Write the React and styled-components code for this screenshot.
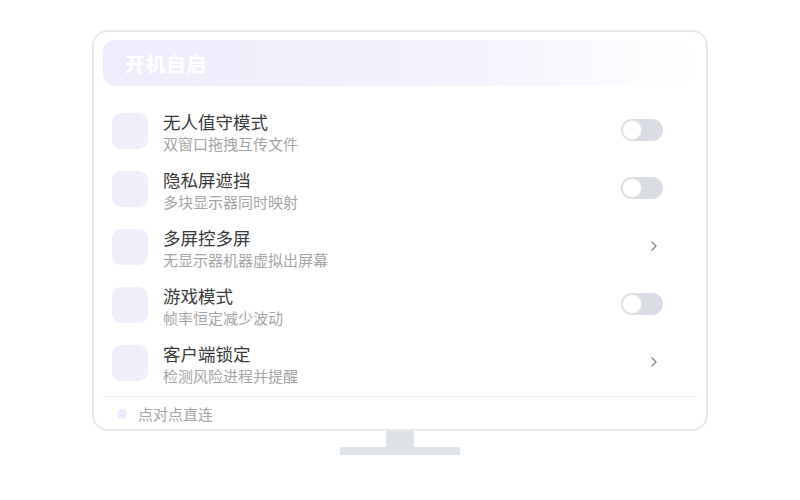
import React from "react";
import styled, { createGlobalStyle } from "styled-components";

const Global = createGlobalStyle`
  html, body { margin: 0; padding: 0; background: #ffffff; }
  body { font-family: "Noto Sans CJK SC", "Noto Sans", sans-serif; }
  * { box-sizing: border-box; }
`;

const Page = styled.div`
  width: 800px;
  height: 500px;
  display: flex;
  flex-direction: column;
  align-items: center;
  padding-top: 30px;
`;

const Screen = styled.div`
  width: 616px;
  height: 401px;
  border: 2px solid #e4e7eb;
  border-radius: 16px;
  background: #ffffff;
  padding: 8px 9px 2px;
  display: flex;
  flex-direction: column;
`;

const Header = styled.div`
  height: 46px;
  flex: none;
  border-radius: 12px;
  background: linear-gradient(90deg, #efecfc 0%, #f4f2fd 60%, rgba(255, 255, 255, 0) 100%);
  display: flex;
  align-items: center;
  padding-left: 22px;
  color: #ffffff;
  font-size: 20px;
  font-weight: 700;
  letter-spacing: 0.5px;
`;

const List = styled.div`
  margin-top: 16px;
  display: flex;
  flex-direction: column;
`;

const Row = styled.div`
  height: 58px;
  display: flex;
  align-items: center;
  padding: 0 34px 0 9px;
`;

const Icon = styled.div`
  width: 36px;
  height: 36px;
  border-radius: 9px;
  background: #f1eefc;
  flex: none;
`;

const Texts = styled.div`
  margin-left: 15px;
  display: flex;
  flex-direction: column;
  flex: 1;
  padding-top: 3px;
`;

const Title = styled.div`
  font-size: 17.5px;
  line-height: 22px;
  color: #3a3a3a;
`;

const Sub = styled.div`
  font-size: 15px;
  line-height: 21px;
  color: #a5a5a5;
`;

const Track = styled.div`
  width: 42px;
  height: 22px;
  border-radius: 11px;
  background: #d9dce2;
  padding: 1px;
  display: flex;
  align-items: center;
  margin-top: -2px;
`;

const Knob = styled.div`
  width: 20px;
  height: 20px;
  border-radius: 50%;
  background: #ffffff;
  border: 1px solid #e3e6ea;
`;

const Chevron = styled.svg`
  width: 8px;
  height: 12px;
  margin-right: 5px;
  margin-top: -2px;
`;

const Footer = styled.div`
  margin-top: 4px;
  border-top: 1px solid #eef0f3;
  flex: 1;
  display: flex;
  align-items: center;
  padding: 3px 0 0 14px;
  gap: 11px;
`;

const Dot = styled.div`
  width: 10px;
  height: 10px;
  border-radius: 50%;
  background: #eeeafc;
`;

const FooterText = styled.div`
  font-size: 15px;
  color: #a5a5a5;
`;

const Neck = styled.div`
  width: 28px;
  height: 16px;
  background: #dfe3e8;
`;

const Base = styled.div`
  width: 120px;
  height: 8px;
  background: #dfe3e8;
`;

const items = [
  { t: "无人值守模式", s: "双窗口拖拽互传文件", c: "toggle" },
  { t: "隐私屏遮挡", s: "多块显示器同时映射", c: "toggle" },
  { t: "多屏控多屏", s: "无显示器机器虚拟出屏幕", c: "chevron" },
  { t: "游戏模式", s: "帧率恒定减少波动", c: "toggle" },
  { t: "客户端锁定", s: "检测风险进程并提醒", c: "chevron" },
];

export default function App() {
  return (
    <>
      <Global />
      <Page>
        <Screen>
          <Header>开机自启</Header>
          <List>
            {items.map((it) => (
              <Row key={it.t}>
                <Icon />
                <Texts>
                  <Title>{it.t}</Title>
                  <Sub>{it.s}</Sub>
                </Texts>
                {it.c === "toggle" ? (
                  <Track>
                    <Knob />
                  </Track>
                ) : (
                  <Chevron viewBox="0 0 8 12">
                    <polyline points="2,2 6,6 2,10" fill="none" stroke="#8a8f97" strokeWidth="1.5" strokeLinecap="round" strokeLinejoin="round" />
                  </Chevron>
                )}
              </Row>
            ))}
          </List>
          <Footer>
            <Dot />
            <FooterText>点对点直连</FooterText>
          </Footer>
        </Screen>
        <Neck />
        <Base />
      </Page>
    </>
  );
}
